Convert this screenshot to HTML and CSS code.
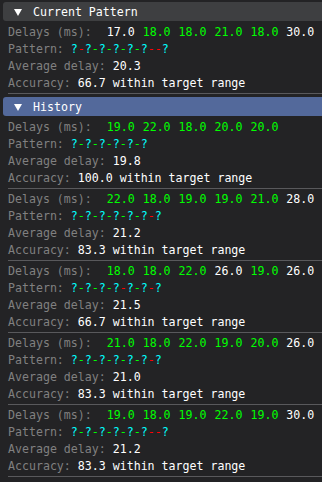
FILE: index.html
```html
<!DOCTYPE html>
<html lang="en">
<head>
<meta charset="UTF-8" />
<title>Rhythm Trainer</title>
<link rel="stylesheet" href="styles.css">
</head>
<body>
<div class="panel">
  <div class="header">
    <svg class="arrow" width="8" height="7" viewBox="0 0 8 7"><polygon points="0,0 8,0 4,7" fill="#ffffff"/></svg>
    <span class="title">Current Pattern</span>
  </div>
  <div class="entry">
    <div class="line delays"><span class="label">Delays (ms): </span><span>17.0</span><span class="ok">18.0</span><span class="ok">18.0</span><span class="ok">21.0</span><span class="ok">18.0</span><span>30.0</span></div>
    <div class="line"><span class="label">Pattern: </span><span class="q">?</span><span class="bad">-</span><span class="q">?</span><span class="ok">-</span><span class="q">?</span><span class="ok">-</span><span class="q">?</span><span class="ok">-</span><span class="q">?</span><span class="ok">-</span><span class="q">?</span><span class="bad">--</span><span class="q">?</span></div>
    <div class="line"><span class="label">Average delay: </span><span>20.3</span></div>
    <div class="line"><span class="label">Accuracy: </span><span>66.7 within target range</span></div>
    <div class="sep"></div>
  </div>

  <div class="header active">
    <svg class="arrow" width="8" height="7" viewBox="0 0 8 7"><polygon points="0,0 8,0 4,7" fill="#ffffff"/></svg>
    <span class="title">History</span>
  </div>
  <div class="entry">
    <div class="line delays"><span class="label">Delays (ms): </span><span class="ok">19.0</span><span class="ok">22.0</span><span class="ok">18.0</span><span class="ok">20.0</span><span class="ok">20.0</span></div>
    <div class="line"><span class="label">Pattern: </span><span class="q">?</span><span class="ok">-</span><span class="q">?</span><span class="ok">-</span><span class="q">?</span><span class="ok">-</span><span class="q">?</span><span class="ok">-</span><span class="q">?</span><span class="ok">-</span><span class="q">?</span></div>
    <div class="line"><span class="label">Average delay: </span><span>19.8</span></div>
    <div class="line"><span class="label">Accuracy: </span><span>100.0 within target range</span></div>
    <div class="sep"></div>
  </div>
  <div class="entry">
    <div class="line delays"><span class="label">Delays (ms): </span><span class="ok">22.0</span><span class="ok">18.0</span><span class="ok">19.0</span><span class="ok">19.0</span><span class="ok">21.0</span><span>28.0</span></div>
    <div class="line"><span class="label">Pattern: </span><span class="q">?</span><span class="ok">-</span><span class="q">?</span><span class="ok">-</span><span class="q">?</span><span class="ok">-</span><span class="q">?</span><span class="ok">-</span><span class="q">?</span><span class="ok">-</span><span class="q">?</span><span class="bad">-</span><span class="q">?</span></div>
    <div class="line"><span class="label">Average delay: </span><span>21.2</span></div>
    <div class="line"><span class="label">Accuracy: </span><span>83.3 within target range</span></div>
    <div class="sep"></div>
  </div>
  <div class="entry">
    <div class="line delays"><span class="label">Delays (ms): </span><span class="ok">18.0</span><span class="ok">18.0</span><span class="ok">22.0</span><span>26.0</span><span class="ok">19.0</span><span>26.0</span></div>
    <div class="line"><span class="label">Pattern: </span><span class="q">?</span><span class="ok">-</span><span class="q">?</span><span class="ok">-</span><span class="q">?</span><span class="ok">-</span><span class="q">?</span><span class="bad">-</span><span class="q">?</span><span class="ok">-</span><span class="q">?</span><span class="bad">-</span><span class="q">?</span></div>
    <div class="line"><span class="label">Average delay: </span><span>21.5</span></div>
    <div class="line"><span class="label">Accuracy: </span><span>66.7 within target range</span></div>
    <div class="sep"></div>
  </div>
  <div class="entry">
    <div class="line delays"><span class="label">Delays (ms): </span><span class="ok">21.0</span><span class="ok">18.0</span><span class="ok">22.0</span><span class="ok">19.0</span><span class="ok">20.0</span><span>26.0</span></div>
    <div class="line"><span class="label">Pattern: </span><span class="q">?</span><span class="ok">-</span><span class="q">?</span><span class="ok">-</span><span class="q">?</span><span class="ok">-</span><span class="q">?</span><span class="ok">-</span><span class="q">?</span><span class="ok">-</span><span class="q">?</span><span class="bad">-</span><span class="q">?</span></div>
    <div class="line"><span class="label">Average delay: </span><span>21.0</span></div>
    <div class="line"><span class="label">Accuracy: </span><span>83.3 within target range</span></div>
    <div class="sep"></div>
  </div>
  <div class="entry">
    <div class="line delays"><span class="label">Delays (ms): </span><span class="ok">19.0</span><span class="ok">18.0</span><span class="ok">19.0</span><span class="ok">22.0</span><span class="ok">19.0</span><span>30.0</span></div>
    <div class="line"><span class="label">Pattern: </span><span class="q">?</span><span class="ok">-</span><span class="q">?</span><span class="ok">-</span><span class="q">?</span><span class="ok">-</span><span class="q">?</span><span class="ok">-</span><span class="q">?</span><span class="ok">-</span><span class="q">?</span><span class="bad">--</span><span class="q">?</span></div>
    <div class="line"><span class="label">Average delay: </span><span>21.2</span></div>
    <div class="line"><span class="label">Accuracy: </span><span>83.3 within target range</span></div>
    <div class="sep"></div>
  </div>
</div>
</body>
</html>
```

FILE: styles.css
```css
* { margin: 0; padding: 0; box-sizing: border-box; }
body {
  background-color: #232325;
  color: #ffffff;
  font-family: "DejaVu Sans Mono", monospace;
  font-size: 11.6px;
  overflow: hidden;
}
.panel { padding-top: 2px; }

.header {
  display: flex;
  align-items: flex-start;
  height: 19px;
  margin: 0 -8px 4px 3px;
  padding-left: 11px;
  background-color: #3e3f41;
  border-radius: 3px;
}
.header.active { background-color: #53699b; }
.arrow { margin-top: 7px; margin-right: 11px; flex: none; }
.title { line-height: 21px; white-space: pre; }

.line {
  display: flex;
  height: 13px;
  line-height: 15px;
  margin-bottom: 4px;
  padding-left: 8px;
  white-space: pre;
}
.delays { gap: 8px; }
.label { color: #808080; }
.ok { color: #00ff00; }
.bad { color: #ff0000; }
.q { color: #00ffff; }

.sep {
  height: 1px;
  margin: 0 0 3px 8px;
  background-color: #59595c;
}
```
